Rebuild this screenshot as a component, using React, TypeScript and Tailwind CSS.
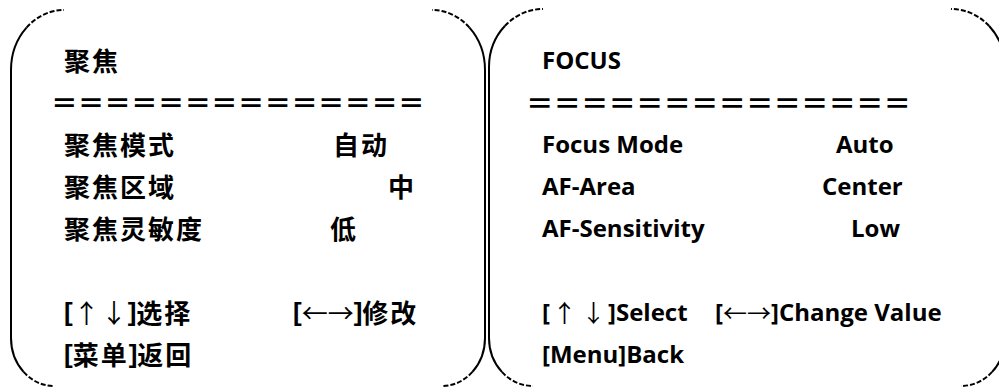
import React from 'react';

type Corner = [number, number];

interface FrameProps {
  w: number;
  h: number;
  tl: Corner;
  tr: Corner;
  bl: Corner;
  br: Corner;
}

// rounded frame: sides solid, corner arcs fade into short dashes
function Frame({ w, h, tl, tr, bl, br }: FrameProps) {
  const s = 1;
  const k = 0.7071;
  const tlMid = [s + tl[0] - tl[0] * k, s + tl[1] - tl[1] * k];
  const trMid = [w - s - tr[0] + tr[0] * k, s + tr[1] - tr[1] * k];
  const blMid = [s + bl[0] - bl[0] * k, h - s - bl[1] + bl[1] * k];
  const brMid = [w - s - br[0] + br[0] * k, h - s - br[1] + br[1] * k];

  const solid = [
    `M ${tlMid[0]} ${tlMid[1]} A ${tl[0]} ${tl[1]} 0 0 0 ${s} ${s + tl[1]}`,
    `L ${s} ${h - s - bl[1]} A ${bl[0]} ${bl[1]} 0 0 0 ${blMid[0]} ${blMid[1]}`,
    `M ${trMid[0]} ${trMid[1]} A ${tr[0]} ${tr[1]} 0 0 1 ${w - s} ${s + tr[1]}`,
    `L ${w - s} ${h - s - br[1]} A ${br[0]} ${br[1]} 0 0 1 ${brMid[0]} ${brMid[1]}`,
  ].join(' ');

  const dashed = [
    `M ${tlMid[0]} ${tlMid[1]} A ${tl[0]} ${tl[1]} 0 0 1 ${s + tl[0]} ${s}`,
    `M ${blMid[0]} ${blMid[1]} A ${bl[0]} ${bl[1]} 0 0 0 ${s + bl[0]} ${h - s}`,
    `M ${trMid[0]} ${trMid[1]} A ${tr[0]} ${tr[1]} 0 0 0 ${w - s - tr[0]} ${s}`,
    `M ${brMid[0]} ${brMid[1]} A ${br[0]} ${br[1]} 0 0 1 ${w - s - br[0]} ${h - s}`,
  ].join(' ');

  return (
    <svg className="absolute inset-0 pointer-events-none" width={w} height={h} viewBox={`0 0 ${w} ${h}`}>
      <path d={solid} fill="none" stroke="#000" strokeWidth={2} />
      <path d={dashed} fill="none" stroke="#000" strokeWidth={2} strokeDasharray="5 2" />
    </svg>
  );
}

const cjk = "font-['Noto_Sans_CJK_SC',sans-serif]";
const latin = "font-['Open_Sans','Noto_Sans_CJK_SC',sans-serif]";
const zhBracket = "font-['Liberation_Sans',sans-serif] font-bold tracking-normal";

function UpDown({ bracket, box }: { bracket: string; box: string }) {
  return (
    <span className="inline-flex items-center">
      <span className={bracket}>[</span>
      <span className={`inline-flex ${box} justify-around ${cjk} font-normal tracking-normal`}>
        <span>↑</span>
        <span>↓</span>
      </span>
      <span className={bracket}>]</span>
    </span>
  );
}

function LeftRight({ bracket }: { bracket: string }) {
  return (
    <span className="inline-flex items-center">
      <span className={bracket}>[</span>
      <span className={`inline-flex ${cjk} font-normal tracking-normal`}>←→</span>
      <span className={bracket}>]</span>
    </span>
  );
}

export default function App() {
  const row = 'flex h-[42px] items-center leading-[42px] whitespace-nowrap';

  return (
    <div className="w-[999px] h-[387px] overflow-hidden bg-white text-black flex">
      {/* Chinese menu */}
      <div className={`relative ml-[10px] mt-[9px] w-[476px] h-[378px] shrink-0 ${cjk} text-[26px] tracking-[2px] font-bold`}>
        <Frame w={476} h={378} tl={[53, 60]} tr={[53, 60]} bl={[43, 48]} br={[43, 48]} />
        <div className="pt-[30px] pl-[54px]">
          <div className={row}>聚焦</div>
          <div className={`${row} -ml-[13px] text-[26.7px] tracking-normal font-bold`}>
            ＝＝＝＝＝＝＝＝＝＝＝＝＝＝
          </div>
          <div className={row}>
            <span className="w-[269px]">聚焦模式</span>
            <span>自动</span>
          </div>
          <div className={row}>
            <span className="w-[324px]">聚焦区域</span>
            <span>中</span>
          </div>
          <div className={row}>
            <span className="w-[266px]">聚焦灵敏度</span>
            <span>低</span>
          </div>
          <div className="h-[42px]" />
          <div className={row}>
            <span className="w-[229px] flex">
              <UpDown bracket={zhBracket} box="w-[55px]" />
              <span>选择</span>
            </span>
            <LeftRight bracket={zhBracket} />
            <span>修改</span>
          </div>
          <div className={row}>
            <span className={zhBracket}>[</span>
            <span>菜单</span>
            <span className={zhBracket}>]</span>
            <span>返回</span>
          </div>
        </div>
      </div>

      {/* English menu */}
      <div className={`relative ml-[2px] mt-[8px] w-[518px] h-[379px] shrink-0 ${latin} text-[24px] font-bold`}>
        <Frame w={518} h={379} tl={[54, 58]} tr={[54, 58]} bl={[44, 48]} br={[44, 48]} />
        <div className="pt-[31px] pl-[54px]">
          <div className={row}>FOCUS</div>
          <div className={`${row} -ml-[16px] ${cjk} text-[27.5px] font-bold`}>＝＝＝＝＝＝＝＝＝＝＝＝＝＝</div>
          <div className={row}>
            <span className="w-[294px]">Focus Mode</span>
            <span>Auto</span>
          </div>
          <div className={row}>
            <span className="w-[280px]">AF-Area</span>
            <span>Center</span>
          </div>
          <div className={row}>
            <span className="w-[309px]">AF-Sensitivity</span>
            <span>Low</span>
          </div>
          <div className="h-[42px]" />
          <div className={row}>
            <span className="w-[173px] flex">
              <UpDown bracket="" box="w-[58px]" />
              <span>Select</span>
            </span>
            <LeftRight bracket="" />
            <span>Change Value</span>
          </div>
          <div className={row}>[Menu]Back</div>
        </div>
      </div>
    </div>
  );
}
